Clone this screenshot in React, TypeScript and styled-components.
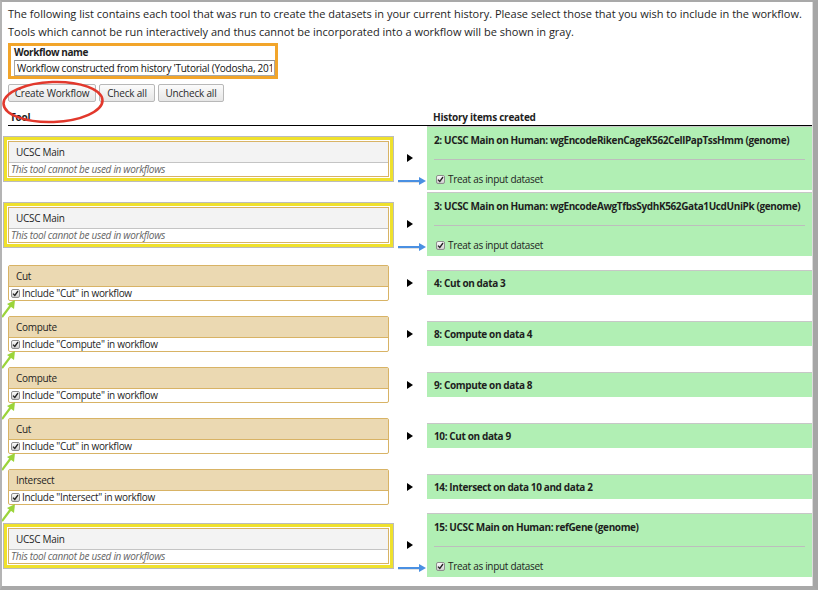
import React from 'react';
import styled, { createGlobalStyle } from 'styled-components';

const GlobalStyle = createGlobalStyle`
    html, body {
        margin: 0;
        padding: 0;
        background: #fff;
    }
    body {
        font-family: "Open Sans", "DejaVu Sans", sans-serif;
        font-size: 10px;
        letter-spacing: -0.3px;
        color: #1e1e1e;
    }
`

const Frame = styled.div`
    width: 818px;
    height: 590px;
    box-sizing: border-box;
    border-top: 2px solid #a9a9a9;
    border-left: 2px solid #b4b4b4;
    border-right: 5px solid #a6a6a6;
    border-bottom: 4px solid #a9a9a9;
    box-shadow: inset -1px 0 0 #dcdcdc;
    overflow: hidden;
`

const Content = styled.div`
    position: relative;
    padding: 5px 1px 0 6px;
`

const Intro = styled.p`
    margin: 0 0 4px;
    font-size: 11px;
    letter-spacing: 0;
    line-height: 14px;
    white-space: nowrap;
`

const NameBox = styled.div`
    width: 270px;
    box-sizing: border-box;
    margin-top: 1px;
    border: 3px solid #f2a52a;
    padding: 0 0 0 3px;
`

const NameLabel = styled.div`
    font-weight: bold;
    letter-spacing: -0.4px;
    line-height: 13px;
`

const NameInput = styled.input`
    display: block;
    width: 261px;
    height: 16px;
    box-sizing: border-box;
    margin: 1px 0 0;
    padding: 0 2px;
    border: 1px solid #a8a8a8;
    border-top-color: #8c8c8c;
    font-family: inherit;
    font-size: 10px;
    letter-spacing: -0.25px;
    color: #111;
    outline: none;
`

const ButtonRow = styled.div`
    display: flex;
    gap: 3px;
    margin-top: 5px;
`

const Button = styled.button<{ w: number }>`
    width: ${props => props.w}px;
    height: 18px;
    padding: 0;
    border: 1px solid #b8b8b8;
    border-radius: 2px;
    background: linear-gradient(#fbfbfb, #e6e6e6);
    font-family: inherit;
    font-size: 10px;
    letter-spacing: -0.2px;
    color: #2a2a2a;
`

const Ellipse = styled.svg`
    position: absolute;
    left: 0;
    top: 78px;
    overflow: visible;
`

const Columns = styled.div`
    display: grid;
    grid-template-columns: 384px 35px 1fr;
    align-items: center;
`

const Header = styled(Columns)`
    margin-top: 7px;
    border-bottom: 1px solid #000;
    font-weight: bold;
    letter-spacing: -0.25px;
    line-height: 16px;

    & > span:first-child {
        padding-left: 2px;
    }
    & > span:last-child {
        padding-left: 6px;
    }
`

const Row = styled(Columns)`
    margin-bottom: 2px;
`

const ToolCell = styled.div`
    padding: 7px 0 6px;
`

const ToolBox = styled.div<{ disabled?: boolean }>`
    position: relative;
    width: 381px;
    box-sizing: border-box;
    border: 1px solid #d8b365;
    border-radius: 2px;
    background: #fff;

    ${props => props.disabled && `
        border-radius: 0;
        outline: 3px solid #efe12c;
        outline-offset: 1px;
        box-shadow: 0 0 0 1px #fff, 0 0 0 5px #bcbcbc;
    `}
`

const ToolTitle = styled.div<{ disabled?: boolean }>`
    height: 20px;
    line-height: 20px;
    padding-left: 7px;
    background: ${props => props.disabled ? '#f3f3f3' : '#ebd9b2'};
    border-bottom: 1px solid ${props => props.disabled ? '#c4c4c4' : '#d8b365'};
`

const ToolBody = styled.div`
    display: flex;
    align-items: center;
    gap: 2px;
    height: 13px;
    line-height: 13px;
    padding-left: 2px;
`

const Notice = styled.span`
    font-style: italic;
    color: #666;
`

const Toggle = styled.svg`
    justify-self: center;
`

const Dataset = styled.div<{ tall?: boolean }>`
    position: relative;
    border-top: 1px solid #c7c7c7;
    background: #b1efb4;
    padding: ${props => props.tall ? '6px 7px 4px' : '5px 7px'};
    line-height: 14px;
`

const DatasetTitle = styled.div`
    font-weight: bold;
    letter-spacing: -0.38px;
    white-space: nowrap;
`

const Rule = styled.div`
    height: 1px;
    margin: 12px 0 12px;
    background: #bdbdbd;
`

const InputRow = styled.label`
    display: flex;
    align-items: center;
    gap: 3px;
    padding-left: 2px;
`

const Box = styled.span`
    display: inline-flex;
    align-items: center;
    justify-content: center;
    width: 9px;
    height: 9px;
    box-sizing: border-box;
    border: 1px solid #8e8e8e;
    border-radius: 2px;
    background: linear-gradient(#fbfbfb, #cfcfcf);
`

const BlueArrow = styled.svg`
    position: absolute;
    left: -29px;
    bottom: 5px;
    overflow: visible;
`

const GreenArrow = styled.svg`
    position: absolute;
    left: -8px;
    top: 33px;
    overflow: visible;
`

const Check = () => (
    <Box>
        <svg width="7" height="7" viewBox="0 0 7 7">
            <path d="M1 3.6 L2.8 5.5 L6 1" fill="none" stroke="#222" strokeWidth="1.3" />
        </svg>
    </Box>
)

const Triangle = () => (
    <Toggle width="6" height="8" viewBox="0 0 6 8">
        <polygon points="0,0 6,4 0,8" fill="#000" />
    </Toggle>
)

const Blue = () => (
    <BlueArrow width="29" height="8" viewBox="0 0 29 8">
        <line x1="0" y1="4.6" x2="22" y2="4.6" stroke="rgba(0,0,0,0.2)" strokeWidth="2" />
        <line x1="0" y1="4" x2="22" y2="4" stroke="#4a90e2" strokeWidth="2" />
        <polygon points="21,0 28,4 21,8" fill="#4a90e2" />
    </BlueArrow>
)

const Green = () => (
    <GreenArrow width="16" height="18" viewBox="0 0 16 18">
        <line x1="1" y1="18" x2="10" y2="6" stroke="#9bd43a" strokeWidth="2.2" />
        <polygon points="14,1 13,10 6,5" fill="#9bd43a" />
    </GreenArrow>
)

interface Step {
    tool: string,
    hid: string,
    input?: boolean,
}

const steps: Step[] = [
    { tool: 'UCSC Main', hid: '2: UCSC Main on Human: wgEncodeRikenCageK562CellPapTssHmm (genome)', input: true },
    { tool: 'UCSC Main', hid: '3: UCSC Main on Human: wgEncodeAwgTfbsSydhK562Gata1UcdUniPk (genome)', input: true },
    { tool: 'Cut', hid: '4: Cut on data 3' },
    { tool: 'Compute', hid: '8: Compute on data 4' },
    { tool: 'Compute', hid: '9: Compute on data 8' },
    { tool: 'Cut', hid: '10: Cut on data 9' },
    { tool: 'Intersect', hid: '14: Intersect on data 10 and data 2' },
    { tool: 'UCSC Main', hid: '15: UCSC Main on Human: refGene (genome)', input: true },
]

const StepRow = ({ step }: { step: Step }) => (
    <Row>
        <ToolCell>
            <ToolBox disabled={step.input}>
                <ToolTitle disabled={step.input}>{step.tool}</ToolTitle>
                {step.input ? (
                    <ToolBody>
                        <Notice>This tool cannot be used in workflows</Notice>
                    </ToolBody>
                ) : (
                    <ToolBody>
                        <Check />
                        <span>Include "{step.tool}" in workflow</span>
                    </ToolBody>
                )}
                {!step.input && <Green />}
            </ToolBox>
        </ToolCell>
        <Triangle />
        <Dataset tall={step.input}>
            <DatasetTitle>{step.hid}</DatasetTitle>
            {step.input && (
                <>
                    <Rule />
                    <InputRow>
                        <Check />
                        <span>Treat as input dataset</span>
                    </InputRow>
                    <Blue />
                </>
            )}
        </Dataset>
    </Row>
)

const App = () => {
    return (
        <>
            <GlobalStyle />
            <Frame>
                <Content>
                    <Intro>The following list contains each tool that was run to create the datasets in your current history. Please select those that you wish to include in the workflow.</Intro>
                    <Intro>Tools which cannot be run interactively and thus cannot be incorporated into a workflow will be shown in gray.</Intro>
                    <NameBox>
                        <NameLabel>Workflow name</NameLabel>
                        <NameInput defaultValue="Workflow constructed from history 'Tutorial (Yodosha, 2014)'" />
                    </NameBox>
                    <ButtonRow>
                        <Button w={88}>Create Workflow</Button>
                        <Button w={56}>Check all</Button>
                        <Button w={66}>Uncheck all</Button>
                    </ButtonRow>
                    <Ellipse width="104" height="44" viewBox="0 0 104 44">
                        <ellipse cx="51" cy="22" rx="49.5" ry="20" fill="none" stroke="#e2382c" strokeWidth="2.6" transform="rotate(-2 51 22)" />
                    </Ellipse>
                    <Header>
                        <span>Tool</span>
                        <span />
                        <span>History items created</span>
                    </Header>
                    {steps.map((step, i) => <StepRow key={i} step={step} />)}
                </Content>
            </Frame>
        </>
    )
}

export default App;
